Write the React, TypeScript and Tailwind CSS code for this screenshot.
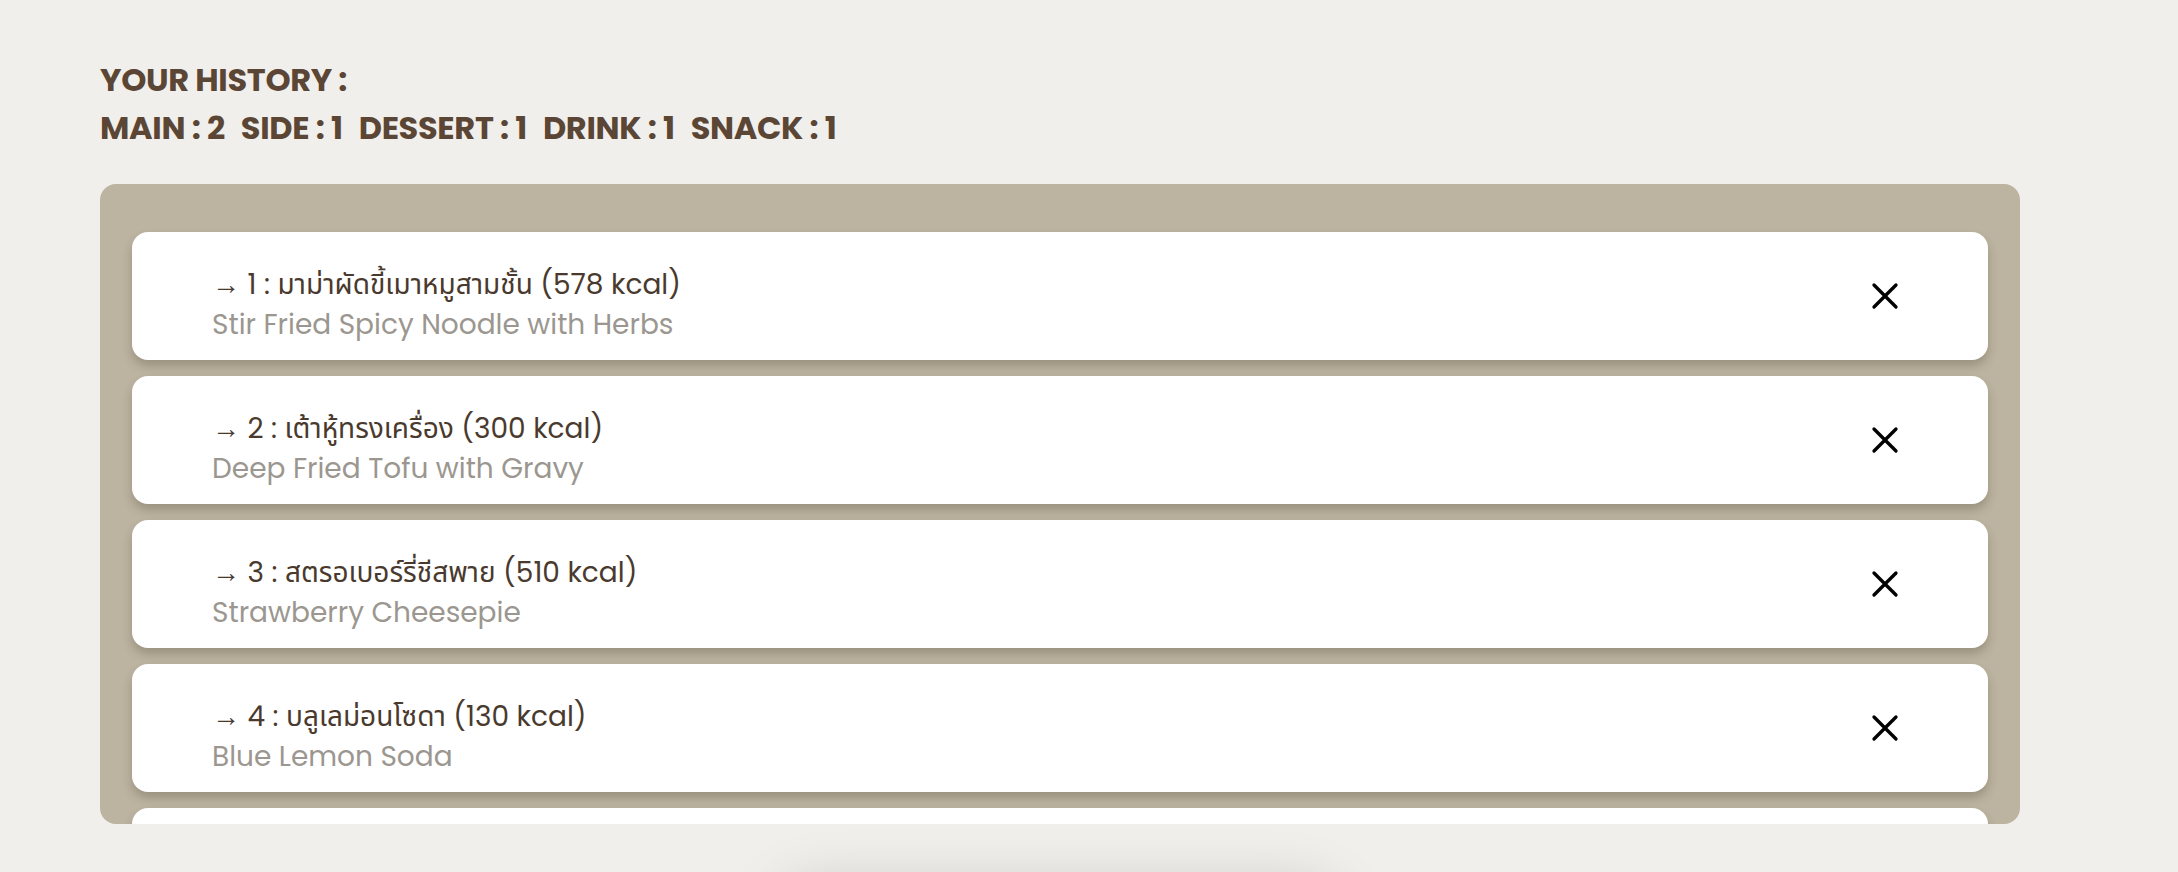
import { X } from "lucide-react";

type Item = {
  th: string;
  en: string;
  kcal: number;
};

const history: Item[] = [
  { th: "มาม่าผัดขี้เมาหมูสามชั้น", en: "Stir Fried Spicy Noodle with Herbs", kcal: 578 },
  { th: "เต้าหู้ทรงเครื่อง", en: "Deep Fried Tofu with Gravy", kcal: 300 },
  { th: "สตรอเบอร์รี่ชีสพาย", en: "Strawberry Cheesepie", kcal: 510 },
  { th: "บลูเลม่อนโซดา", en: "Blue Lemon Soda", kcal: 130 },
  { th: "มันฝรั่งทอด", en: "French Fries", kcal: 312 },
];

const counts = [
  ["MAIN", 2],
  ["SIDE", 1],
  ["DESSERT", 1],
  ["DRINK", 1],
  ["SNACK", 1],
] as const;

export default function App() {
  return (
    <div
      className="min-h-screen bg-[#f0efeb] px-[100px] pt-[56px] overflow-hidden"
      style={{ fontFamily: '"Poppins", "Open Sans", "Noto Sans", "Noto Sans Thai", sans-serif' }}
    >
      {/* summary */}
      <div className="text-[#5b4636] font-bold text-[32px] leading-[48px] tracking-[-0.01em]">
        <div>YOUR HISTORY :</div>
        <div className="flex gap-[16px]">
          {counts.map(([k, v]) => (
            <span key={k}>
              {k} : {v}
            </span>
          ))}
        </div>
      </div>

      {/* list */}
      <div className="mt-[32px] w-[1920px] h-[640px] bg-[#bcb3a0] rounded-[16px] px-[32px] pt-[48px] overflow-hidden flex flex-col gap-[16px]">
        {history.map((item, i) => (
          <div
            key={i}
            className="shrink-0 h-[128px] bg-white rounded-[16px] shadow-[0_6px_10px_rgba(60,50,30,0.25)] flex items-center justify-between pl-[80px] pr-[81px]"
          >
            <div className="flex flex-col pt-[17px]">
              <span className="text-[28px] leading-[40px] text-[#4a3a2e]">
                <span className="font-semibold">→</span> {i + 1} : {item.th} ({item.kcal} kcal)
              </span>
              <span className="text-[28px] leading-[40px] text-[#9b9790]">{item.en}</span>
            </div>
            <button className="text-black">
              <X size={44} strokeWidth={1.8} />
            </button>
          </div>
        ))}
      </div>

      {/* button shadow peeking from below */}
      <div className="mt-[64px] mx-auto w-[560px] h-[70px] rounded-full bg-[#f0efeb] shadow-[0_0_60px_rgba(0,0,0,0.18)] relative left-[-31px]" />
    </div>
  );
}
